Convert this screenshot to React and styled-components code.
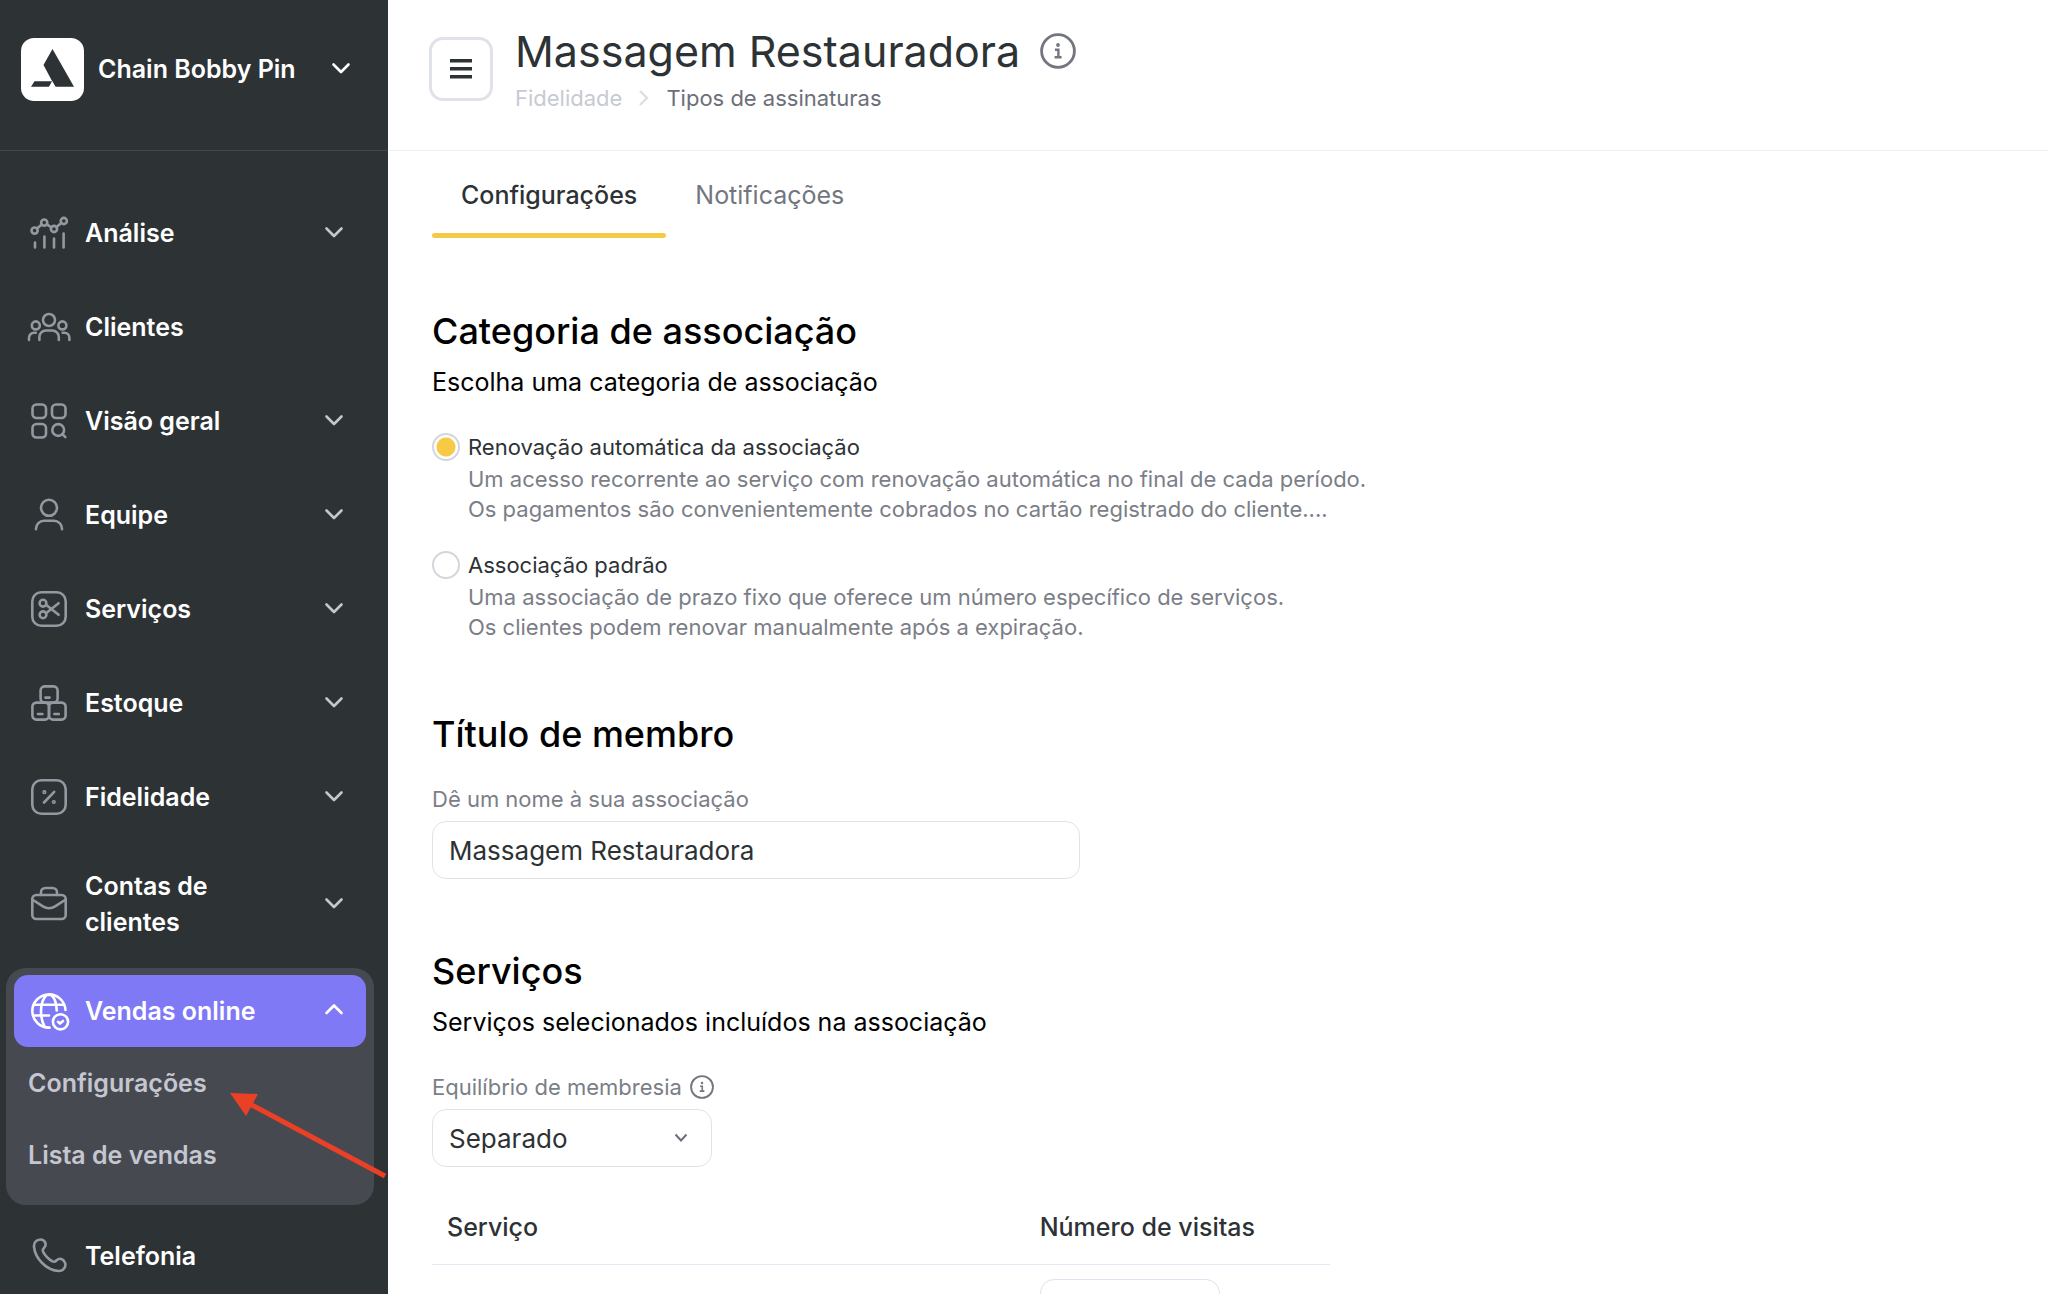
import React, { useState } from "react"
import styled, { createGlobalStyle, css } from "styled-components"

const GlobalStyle = createGlobalStyle`
  *, *::before, *::after {
    box-sizing: border-box;
  }
  body {
    margin: 0;
    background: #fff;
    color: #2d3235;
    font-family: Inter, "Liberation Sans", sans-serif;
    font-size: 25px;
  }
  button, input, select {
    font: inherit;
    color: inherit;
  }
  h1, h2, p, ul {
    margin: 0;
    padding: 0;
  }
`

const Page = styled.div`
  display: flex;
  height: 100vh;
  overflow: hidden;
`

const Sidebar = styled.aside`
  flex: 0 0 388px;
  background: #2d3235;
  color: #fff;
`

const Account = styled.button`
  display: flex;
  align-items: center;
  gap: 14px;
  width: 100%;
  height: 151px;
  padding: 0 37px 12px 21px;
  border: 0;
  border-bottom: 1px solid #43474b;
  background: none;
  color: #fff;
  font-weight: 600;
  text-align: left;
`

const AccountName = styled.span`
  flex: 1;
`

const Menu = styled.ul`
  display: flex;
  flex-direction: column;
  gap: 22px;
  padding: 46px 22px 0 14px;
  list-style: none;
`

const MenuItem = styled.li`
  position: relative;
  ${({ $open }) =>
    $open &&
    css`
      margin: -7px -8px;
      padding: 7px 8px 14px;
      border-radius: 20px;
      background: #474951;
    `}
`

const MenuButton = styled.button`
  display: flex;
  align-items: center;
  gap: 14px;
  width: 100%;
  min-height: ${({ $tall }) => ($tall ? 98 : 72)}px;
  padding: 0 22px 0 13px;
  border: 0;
  border-radius: 14px;
  background: ${({ $active }) => ($active ? "#8079f5" : "none")};
  color: #fff;
  font-weight: 600;
  line-height: 36px;
  text-align: left;
`

const MenuIcon = styled.svg`
  flex: none;
  width: 44px;
  height: 44px;
  fill: none;
  stroke: ${({ $active }) => ($active ? "#fff" : "#9598a1")};
  stroke-width: 2.6;
  stroke-linecap: round;
  stroke-linejoin: round;
`

const MenuLabel = styled.span`
  flex: 1;
  max-width: 180px;
  margin-right: auto;
`

const Chevron = styled.svg`
  flex: none;
  width: 20px;
  height: 20px;
  margin-left: auto;
  fill: none;
  stroke: ${({ $bright }) => ($bright ? "#fff" : "#c6c7cb")};
  stroke-width: 2.6;
  stroke-linecap: round;
  stroke-linejoin: round;
`

const SubMenu = styled.ul`
  list-style: none;
`

const SubLink = styled.a`
  display: block;
  padding-left: 14px;
  color: #c4c6d0;
  font-weight: 600;
  line-height: 72px;
  text-decoration: none;
`

const Pointer = styled.svg`
  position: absolute;
  top: 124px;
  left: 222px;
  width: 160px;
  height: 90px;
  pointer-events: none;
`

const Main = styled.main`
  flex: 1;
  min-width: 0;
`

const Header = styled.header`
  display: flex;
  align-items: flex-start;
  gap: 22px;
  height: 151px;
  padding: 24px 41px 0;
  border-bottom: 1px solid #f0f0f2;
`

const Toggle = styled.button`
  display: flex;
  align-items: center;
  justify-content: center;
  width: 64px;
  height: 64px;
  margin-top: 13px;
  padding: 0;
  border: 3px solid #e0e2ea;
  border-radius: 14px;
  background: #fff;
`

const TitleRow = styled.div`
  display: flex;
  align-items: center;
  gap: 20px;
`

const Title = styled.h1`
  font-size: 43px;
  font-weight: 400;
  line-height: 54px;
`

const InfoButton = styled.button`
  display: flex;
  padding: 0;
  border: 0;
  background: none;
  color: #73767f;
`

const Crumbs = styled.nav`
  display: flex;
  align-items: center;
  gap: 16px;
  margin-top: 5px;
  font-size: 22px;
  line-height: 30px;
`

const Crumb = styled.a`
  color: ${({ $current }) => ($current ? "#6c6f79" : "#c7cad3")};
  text-decoration: none;
`

const Tabs = styled.div`
  display: flex;
  padding: 0 44px;
`

const Tab = styled.button`
  padding: 29px 29px 0;
  border: 0;
  background: none;
  color: ${({ $active }) => ($active ? "#2d3235" : "#73767f")};
  font-weight: ${({ $active }) => ($active ? 500 : 400)};
  line-height: 30px;

  &::after {
    content: "";
    display: block;
    height: 5px;
    margin: 23px -29px 0;
    border-radius: 3px;
    background: ${({ $active }) => ($active ? "#f7ca45" : "transparent")};
  }
`

const Form = styled.form`
  display: flex;
  flex-direction: column;
  gap: 70px;
  padding: 71px 44px 0;
`

const Section = styled.section`
  color: #000;
`

const SectionTitle = styled.h2`
  font-size: 36px;
  font-weight: 500;
  line-height: 44px;
`

const SectionText = styled.p`
  margin-top: 13px;
  line-height: 32px;
`

const Options = styled.div`
  display: flex;
  flex-direction: column;
  gap: 26px;
  margin-top: 34px;
`

const Option = styled.label`
  display: grid;
  grid-template-columns: 28px 1fr;
  column-gap: 8px;
  align-items: start;
  color: #2d3235;
  font-size: 22px;
  line-height: 30px;
`

const Radio = styled.input`
  appearance: none;
  width: 28px;
  height: 28px;
  margin: 1px 0 0;
  border: 2px solid #d5d6dc;
  border-radius: 50%;
  background: #fff;

  &:checked {
    background: radial-gradient(circle, #f7ca45 9px, #fff 10px);
  }
`

const OptionText = styled.span`
  grid-column: 2;
  margin-top: 2px;
  color: #7b7e87;
`

const Field = styled.div`
  display: flex;
  flex-direction: column;
  align-items: flex-start;
  gap: 7px;
  margin-top: ${({ $far }) => ($far ? 34 : 28)}px;
`

const FieldLabel = styled.div`
  display: flex;
  align-items: center;
  gap: 8px;
  color: #7b7e87;
  font-size: 22px;
  line-height: 30px;
`

const control = css`
  height: 58px;
  padding: 0 16px;
  border: 1px solid #e1e2ea;
  border-radius: 14px;
  background: #fff;
  color: #2d3235;
  font-size: 26px;
`

const TextInput = styled.input`
  ${control}
  width: 100%;
  max-width: 648px;
`

const SelectWrap = styled.div`
  display: grid;
  align-items: center;
  width: 280px;

  > * {
    grid-area: 1 / 1;
  }

  svg {
    justify-self: end;
    margin-right: 24px;
    pointer-events: none;
  }
`

const Select = styled.select`
  ${control}
  appearance: none;
  width: 100%;
`

const ServiceTable = styled.table`
  width: 100%;
  max-width: 898px;
  margin-top: 24px;
  border-collapse: collapse;
  color: #2d3235;
`

const HeadCell = styled.th`
  width: ${({ $wide }) => ($wide ? "66%" : "auto")};
  height: 73px;
  padding: 0 15px;
  border-bottom: 1px solid #e6e8f3;
  font-weight: 500;
  text-align: left;
`

const Cell = styled.td`
  padding: 14px 15px;
`

const VisitsInput = styled.input`
  ${control}
  width: 180px;
`

const Icons = {
  chart: (
    <>
      <circle cx="7.6" cy="19.6" r="3.1" />
      <circle cx="17.2" cy="11.6" r="3.1" />
      <circle cx="27" cy="18" r="3.1" />
      <circle cx="36.8" cy="10" r="3.1" />
      <path d="M10 17.6l4.7-4M19.8 13.4l4.6 2.9M29.5 15.9l4.8-3.9" />
      <path d="M8 31.5v5M17.4 25.5v11M27 27.5v9M36.6 22.5v14" />
    </>
  ),
  clients: (
    <>
      <circle cx="22" cy="15" r="6" />
      <circle cx="8.8" cy="20.4" r="4" />
      <circle cx="35.4" cy="20.4" r="4" />
      <path d="M12.4 35v-3a6.5 6.5 0 0 1 6.5-6.5h6.4a6.5 6.5 0 0 1 6.5 6.5v3M2 35v-2.2a5 5 0 0 1 5-5h1.8M42.4 35v-2.200a5 5 0 0 0-5-5h-1.800" />
    </>
  ),
  overview: (
    <>
      <rect x="5.5" y="5.5" width="13.5" height="13.5" rx="4" />
      <rect x="25" y="5.5" width="13.5" height="13.5" rx="4" />
      <rect x="5.5" y="25" width="13.5" height="13.5" rx="4" />
      <circle cx="31.2" cy="31" r="5.9" />
      <path d="M35.4 35.2l3 3" />
    </>
  ),
  user: (
    <>
      <circle cx="22" cy="14.8" r="8" />
      <path d="M9 36.2v-.4a8 8 0 0 1 8-8h10a8 8 0 0 1 8 8v.4" />
    </>
  ),
  scissors: (
    <>
      <rect x="5.3" y="5.3" width="33.4" height="33.4" rx="9" />
      <circle cx="16" cy="16.2" r="3.4" />
      <circle cx="16" cy="27.8" r="3.4" />
      <path d="M19 17.8l12.6 10M19 26.2l12.6-10" />
    </>
  ),
  boxes: (
    <>
      <rect x="13.6" y="5.4" width="17" height="16.2" rx="4" />
      <rect x="5.4" y="21.6" width="16.6" height="17" rx="4" />
      <rect x="22" y="21.6" width="16.6" height="17" rx="4" />
      <path d="M18.4 16.6h4.2M11 33h4.4M27.4 33h4.4" />
    </>
  ),
  percent: (
    <>
      <rect x="5.3" y="5.3" width="33.4" height="33.4" rx="9" />
      <path d="M17 27.5L27.2 16.8" />
      <circle cx="17.4" cy="17.2" r=".8" />
      <circle cx="26.8" cy="27" r=".8" />
    </>
  ),
  wallet: (
    <>
      <rect x="5.3" y="13" width="33.4" height="24" rx="4" />
      <path d="M14 13v-2.6a4.4 4.4 0 0 1 4.4-4.4h7.2a4.4 4.4 0 0 1 4.4 4.4V13" />
      <path d="M6 18l9.5 6.2a12 12 0 0 0 13 0L38 18" />
    </>
  ),
  globe: (
    <>
      <path d="M22.5 38.6A16.6 16.6 0 1 1 38.5 21" />
      <path d="M17.5 37.5C15 33 14 28 14 22c0-7 2-12.500 5.500-16h5c3.500 3.500 5 9 5.200 15.500" />
      <path d="M7 15.800h30M7 26.500h15" />
      <circle cx="33.500" cy="32.800" r="7.600" />
      <path d="M31 32.800l2 1.800 3-2.600" />
    </>
  ),
  phone: (
    <path d="M13.5 5.5c-4.500 0-7 3.500-6.400 8C8.300 24 19 36.500 32 37c4.500 0 7.500-4.500 6-8.300-1.700-4-5.500-5.200-8.300-2.500-1.500 1.500-2.500 2-4.200 1.200-4-2.200-7.500-6-9.500-9.800-.7-1.700 0-2.700 1.400-4.200C20 10.500 18 5.500 13.500 5.500z" />
  ),
}

const menu = [
  { icon: "chart", label: "Análise", expandable: true },
  { icon: "clients", label: "Clientes" },
  { icon: "overview", label: "Visão geral", expandable: true },
  { icon: "user", label: "Equipe", expandable: true },
  { icon: "scissors", label: "Serviços", expandable: true },
  { icon: "boxes", label: "Estoque", expandable: true },
  { icon: "percent", label: "Fidelidade", expandable: true },
  { icon: "wallet", label: "Contas de clientes", expandable: true, tall: true },
  {
    icon: "globe",
    label: "Vendas online",
    expandable: true,
    children: ["Configurações", "Lista de vendas"],
  },
  { icon: "phone", label: "Telefonia" },
]

const options = [
  {
    id: "auto",
    label: "Renovação automática da associação",
    lines: [
      "Um acesso recorrente ao serviço com renovação automática no final de cada período.",
      "Os pagamentos são convenientemente cobrados no cartão registrado do cliente....",
    ],
  },
  {
    id: "standard",
    label: "Associação padrão",
    lines: [
      "Uma associação de prazo fixo que oferece um número específico de serviços.",
      "Os clientes podem renovar manualmente após a expiração.",
    ],
  },
]

const Logo = () => (
  <svg width="63" height="63" viewBox="0 0 63 63" aria-hidden="true">
    <rect width="63" height="63" rx="13" fill="#fff" />
    <path
      d="M31.5 11L53 48.8H34.500L31.200 43 28 48.800H10L13.500 43.300H31.200L22.500 27z"
      fill="#2d3235"
    />
    <path d="M31.300 43.600L34.200 49H28.400z" fill="#fff" />
  </svg>
)

const Info = ({ size }) => (
  <svg
    width={size}
    height={size}
    viewBox="0 0 36 36"
    fill="none"
    stroke="currentColor"
    strokeWidth="2.8"
    aria-hidden="true"
  >
    <circle cx="18" cy="18" r="16.4" />
    <circle cx="18" cy="12" r="1.9" fill="currentColor" stroke="none" />
    <path d="M15 16.8h3.400V24M14.600 24.200h7" strokeWidth="2.4" />
  </svg>
)

const MenuEntry = ({ icon, label, expandable, tall, children }) => {
  const active = Boolean(children)
  return (
    <MenuItem $open={active}>
      <MenuButton type="button" $active={active} $tall={tall}>
        <MenuIcon $active={active} viewBox="0 0 44 44" aria-hidden="true">
          {Icons[icon]}
        </MenuIcon>
        <MenuLabel>{label}</MenuLabel>
        {expandable && (
          <Chevron $bright={active} viewBox="0 0 20 20" aria-hidden="true">
            <path d={active ? "M2.5 12L10 4.500 17.500 12" : "M2.5 5.500L10 13l7.500-7.500"} />
          </Chevron>
        )}
      </MenuButton>
      {children && (
        <>
          <SubMenu>
            {children.map(child => (
              <li key={child}>
                <SubLink href="#">{child}</SubLink>
              </li>
            ))}
          </SubMenu>
          <Pointer viewBox="0 0 160 90" aria-hidden="true">
            <path d="M20 11L157 84" stroke="#ea4025" strokeWidth="5" />
            <path d="M2 1L30 2 18 24z" fill="#ea4025" />
          </Pointer>
        </>
      )}
    </MenuItem>
  )
}

const App = () => {
  const [category, setCategory] = useState("auto")
  const [name, setName] = useState("Massagem Restauradora")

  return (
    <Page>
      <GlobalStyle />
      <Sidebar>
        <Account type="button">
          <Logo />
          <AccountName>Chain Bobby Pin</AccountName>
          <Chevron $bright viewBox="0 0 20 20" aria-hidden="true">
            <path d="M2.5 5.500L10 13l7.500-7.500" />
          </Chevron>
        </Account>
        <Menu>
          {menu.map(item => (
            <MenuEntry key={item.label} {...item} />
          ))}
        </Menu>
      </Sidebar>
      <Main>
        <Header>
          <Toggle type="button" aria-label="Menu">
            <svg width="22" height="20" viewBox="0 0 22 20" fill="#2d3235">
              <path d="M0 0h22v3.4H0zM0 8h22v3.400H0zM0 16h22v3.400H0z" />
            </svg>
          </Toggle>
          <div>
            <TitleRow>
              <Title>Massagem Restauradora</Title>
              <InfoButton type="button" aria-label="Info">
                <Info size={36} />
              </InfoButton>
            </TitleRow>
            <Crumbs>
              <Crumb href="#">Fidelidade</Crumb>
              <svg
                width="12"
                height="16"
                viewBox="0 0 12 16"
                fill="none"
                stroke="#dcdee5"
                strokeWidth="2.4"
                aria-hidden="true"
              >
                <path d="M2 1l7 7-7 7" />
              </svg>
              <Crumb href="#" $current>
                Tipos de assinaturas
              </Crumb>
            </Crumbs>
          </div>
        </Header>
        <Tabs role="tablist">
          <Tab type="button" role="tab" aria-selected="true" $active>
            Configurações
          </Tab>
          <Tab type="button" role="tab" aria-selected="false">
            Notificações
          </Tab>
        </Tabs>
        <Form>
          <Section>
            <SectionTitle>Categoria de associação</SectionTitle>
            <SectionText>Escolha uma categoria de associação</SectionText>
            <Options>
              {options.map(({ id, label, lines }) => (
                <Option key={id}>
                  <Radio
                    type="radio"
                    name="category"
                    checked={category === id}
                    onChange={() => setCategory(id)}
                  />
                  <span>{label}</span>
                  <OptionText>
                    {lines[0]}
                    <br />
                    {lines[1]}
                  </OptionText>
                </Option>
              ))}
            </Options>
          </Section>
          <Section>
            <SectionTitle>Título de membro</SectionTitle>
            <Field>
              <FieldLabel as="label" htmlFor="name">
                Dê um nome à sua associação
              </FieldLabel>
              <TextInput
                id="name"
                value={name}
                onChange={e => setName(e.target.value)}
              />
            </Field>
          </Section>
          <Section>
            <SectionTitle>Serviços</SectionTitle>
            <SectionText>
              Serviços selecionados incluídos na associação
            </SectionText>
            <Field $far>
              <FieldLabel>
                <label htmlFor="balance">Equilíbrio de membresia</label>
                <InfoButton type="button" aria-label="Info">
                  <Info size={24} />
                </InfoButton>
              </FieldLabel>
              <SelectWrap>
                <Select id="balance">
                  <option>Separado</option>
                </Select>
                <svg
                  width="14"
                  height="10"
                  viewBox="0 0 14 10"
                  fill="none"
                  stroke="#6c6f79"
                  strokeWidth="2"
                  aria-hidden="true"
                >
                  <path d="M1.5 1.500L7 7.500l5.500-6" />
                </svg>
              </SelectWrap>
            </Field>
            <ServiceTable>
              <thead>
                <tr>
                  <HeadCell $wide>Serviço</HeadCell>
                  <HeadCell>Número de visitas</HeadCell>
                </tr>
              </thead>
              <tbody>
                <tr>
                  <Cell />
                  <Cell>
                    <VisitsInput aria-label="Número de visitas" />
                  </Cell>
                </tr>
              </tbody>
            </ServiceTable>
          </Section>
        </Form>
      </Main>
    </Page>
  )
}

export default App
